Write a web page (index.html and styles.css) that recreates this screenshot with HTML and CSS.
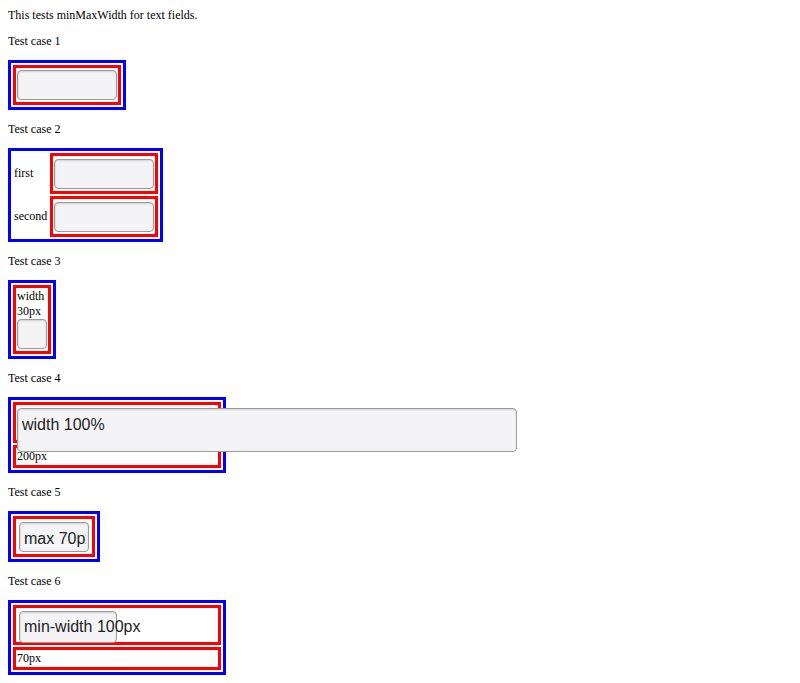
FILE: index.html
```html
<!DOCTYPE html>
<html>
<head>
<meta charset="utf-8">
<link rel="stylesheet" href="styles.css">
</head>
<body>
<div class="intro">This tests minMaxWidth for text fields.</div>

<p class="label">Test case 1</p>
<div class="box">
  <div class="cell"><div class="field f1"></div></div>
</div>

<p class="label">Test case 2</p>
<div class="box two-col">
  <div class="lab">first</div>
  <div class="cell"><div class="field f2"></div></div>
  <div class="lab">second</div>
  <div class="cell"><div class="field f2"></div></div>
</div>

<p class="label">Test case 3</p>
<div class="box">
  <div class="cell c3">width 30px<div class="field f3"></div></div>
</div>

<p class="label">Test case 4</p>
<div class="box">
  <div class="cell c4a"><div class="field f4">width 100%</div></div>
  <div class="cell c4b">200px</div>
</div>

<p class="label">Test case 5</p>
<div class="box">
  <div class="cell"><div class="field f5"><span class="val">max 70px</span></div></div>
</div>

<p class="label">Test case 6</p>
<div class="box">
  <div class="cell c6a"><div class="field f6">min-width 100px</div></div>
  <div class="cell c4b">70px</div>
</div>
</body>
</html>
```

FILE: styles.css
```css
body {
  margin: 8px;
  font: 12px/14px "Liberation Serif", "Times New Roman", serif;
  color: #000;
  background: #fff;
}

.intro {
  line-height: 14px;
}

.label {
  margin: 12px 0;
}

.box {
  display: grid;
  width: max-content;
  border: 3px solid #0000ff;
  padding: 2px;
  gap: 2px;
}

.two-col {
  grid-template-columns: auto auto;
}

.lab {
  padding: 1px;
  display: flex;
  align-items: center;
  line-height: 15px;
}

.cell {
  border: 3px solid #ff0000;
  padding: 1px;
  line-height: 15px;
}

.field {
  box-sizing: border-box;
  border: 1px solid #9c9c9c;
  border-radius: 4px;
  background: #f4f4f6;
  box-shadow: inset 0 1px 2px rgba(0, 0, 0, 0.14), inset 1px 0 1px rgba(0, 0, 0, 0.05);
  font: 16px/18px "Liberation Sans", Arial, sans-serif;
  color: #222;
  padding: 6px 4px 0;
  white-space: nowrap;
}

.f1 {
  width: 100px;
  height: 30px;
  margin: 1px 0;
}

.f2 {
  width: 100px;
  height: 30px;
  margin: 2px 0 1px;
}

.c3 {
  width: 30px;
}

.f3 {
  width: 30px;
  height: 30px;
  margin-bottom: 1px;
}

.c4a {
  width: 200px;
  height: 33px;
}

.f4 {
  position: relative;
  width: 500px;
  height: 44px;
  margin-top: 2px;
  padding-top: 7px;
}

.c4b {
  width: 200px;
}

.f5 {
  width: 70px;
  height: 30px;
  margin: 2px 2px 1px;
  padding: 7px 2px 0 4px;
}

.val {
  display: block;
  overflow: hidden;
}

.c6a {
  width: 200px;
  height: 32px;
}

.f6 {
  position: relative;
  width: 98px;
  height: 32px;
  margin: 2px 0 0 2px;
  overflow: visible;
}
```
